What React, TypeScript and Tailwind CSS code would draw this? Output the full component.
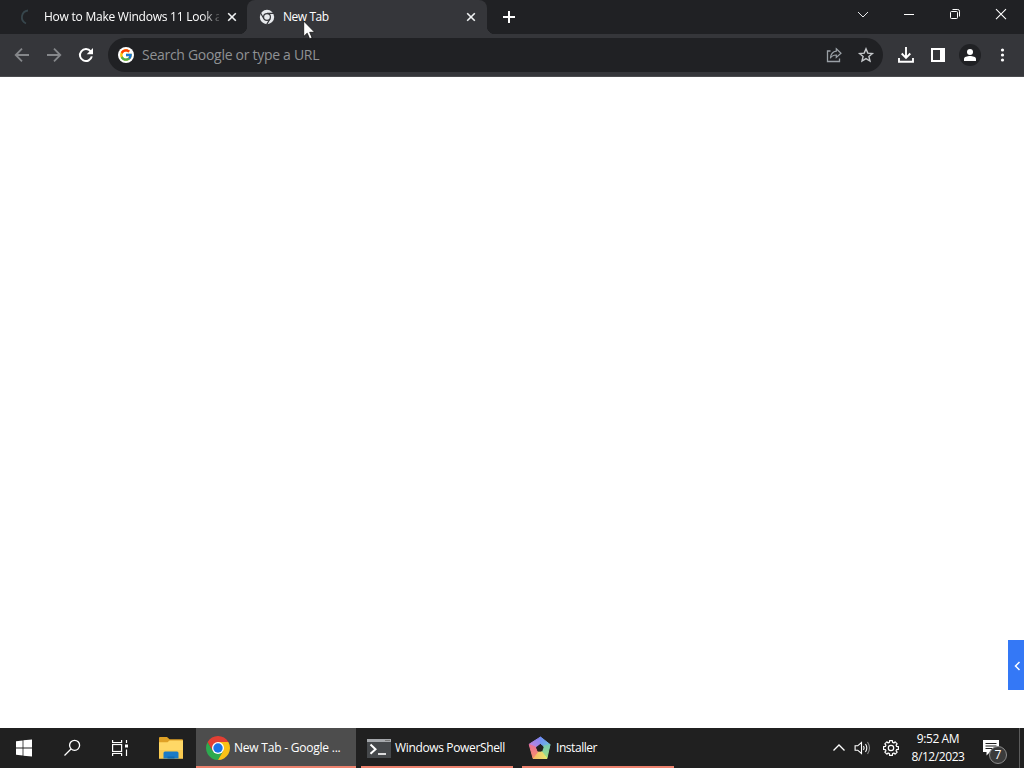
/**
 * Desktop: a dark browser window on an empty new tab, above the taskbar.
 */
import type { ReactNode } from 'react';
import { FcGoogle } from 'react-icons/fc';

interface IconProps {
  className?: string;
}

function CloseIcon({ className }: IconProps) {
  return (
    <svg width="10" height="10" viewBox="0 0 10 10" className={className} fill="none" stroke="#f1f3f4" strokeWidth="1.6">
      <path d="M1.2 1.2l7.6 7.6M8.8 1.2L1.2 8.8" />
    </svg>
  );
}

function ChromeMonoIcon({ className }: IconProps) {
  return (
    <svg width="16" height="16" viewBox="0 0 16 16" className={className}>
      <circle cx="8" cy="8" r="7.2" fill="#e8eaed" />
      <circle cx="8" cy="8" r="4" fill="#35363a" />
      <path d="M8 4.4h7M4.9 9.8L1.4 3.8M11.1 9.8L7.6 15.6" stroke="#35363a" strokeWidth="1.2" />
      <circle cx="8" cy="8" r="2.8" fill="#e8eaed" />
    </svg>
  );
}

function ChromeIcon() {
  return (
    <svg width="24" height="24" viewBox="0 0 24 24" className="shrink-0">
      <path d="M1.61 6A12 12 0 0 0 12 24l5.2-9L12 12l-5.2 3z" fill="#2da94f" />
      <path d="M1.61 6A12 12 0 0 1 22.39 6H12v6l-5.2 3z" fill="#e23f33" />
      <path d="M12 6h10.39A12 12 0 0 1 12 24l5.2-9z" fill="#fbc116" />
      <circle cx="12" cy="12" r="6" fill="#fff" />
      <circle cx="12" cy="12" r="4.7" fill="#1a73e8" />
    </svg>
  );
}

function InstallerIcon() {
  return (
    <svg width="24" height="24" viewBox="0 0 24 24" className="shrink-0">
      <defs>
        <linearGradient id="violet" x1="0" y1="1" x2="1" y2="0">
          <stop offset="0" stopColor="#c985d8" />
          <stop offset="1" stopColor="#7d86f5" />
        </linearGradient>
        <linearGradient id="blue" x1="0" y1="0" x2="1" y2="1">
          <stop offset="0" stopColor="#6f8cf8" />
          <stop offset="1" stopColor="#6fc7d8" />
        </linearGradient>
        <linearGradient id="green" x1="0" y1="0" x2="0" y2="1">
          <stop offset="0" stopColor="#74c9b4" />
          <stop offset="1" stopColor="#a5e27e" />
        </linearGradient>
        <linearGradient id="yellow" x1="0" y1="0" x2="1" y2="0">
          <stop offset="0" stopColor="#f8b564" />
          <stop offset="1" stopColor="#e4ec70" />
        </linearGradient>
        <linearGradient id="red" x1="0" y1="0" x2="0" y2="1">
          <stop offset="0" stopColor="#e8709a" />
          <stop offset="1" stopColor="#f6906a" />
        </linearGradient>
      </defs>
      <g strokeLinejoin="round" strokeWidth="1">
        <path d="M12.5 1L1.500 8 7.500 12l5-4.500z" fill="url(#violet)" stroke="url(#violet)" />
        <path d="M12.5 1l9.500 7.500L20.500 13l-5-3-3-2.500z" fill="url(#blue)" stroke="url(#blue)" />
        <path d="M22 8.500l-3 13.500-5.500-6 2-6z" fill="url(#green)" stroke="url(#green)" />
        <path d="M19 22.500H5l3-6.500h6z" fill="url(#yellow)" stroke="url(#yellow)" />
        <path d="M1.200 8.500l3.800 13.500 4.500-6-2-5z" fill="url(#red)" stroke="url(#red)" />
      </g>
      <path d="M12 8.200l3.700 2.800-1.400 4.200H9.600L8 11.300z" fill="#202020" />
    </svg>
  );
}

function TabStrip() {
  return (
    <div className="flex h-[34px] bg-[#202124] text-xs text-white">
      <div className="flex w-[247px] items-center pl-[19px]">
        <svg width="14" height="16" viewBox="0 0 14 16" fill="none" stroke="#37464c" strokeWidth="1.8">
          <path d="M9 1.500A6.800 6.800 0 0 0 7 14.500" />
        </svg>
        <span className="ml-[11px] w-[175px] whitespace-nowrap tracking-[-0.24px] [mask-image:linear-gradient(to_right,black_90%,transparent_103%)]">
          How to Make Windows 11 Look a
        </span>
        <CloseIcon className="ml-2" />
      </div>

      <div className="relative flex w-60 items-center rounded-t-lg bg-[#35363a] pl-3">
        <span className="absolute bottom-0 -left-2 size-2 bg-[radial-gradient(circle_at_0_0,transparent_8px,#35363a_8.5px)]" />
        <span className="absolute -right-2 bottom-0 size-2 bg-[radial-gradient(circle_at_100%_0,transparent_8px,#35363a_8.5px)]" />
        <ChromeMonoIcon />
        <span className="ml-2 flex-1 tracking-[-0.45px]">New Tab</span>
        <CloseIcon className="mr-[11px]" />
      </div>

      <svg width="14" height="14" viewBox="0 0 14 14" className="mt-[10px] ml-[15px]" stroke="#fff" strokeWidth="2">
        <path d="M7 1v12M1 7h12" />
      </svg>

      <div className="ml-auto flex h-[29px] items-center">
        <svg width="46" height="29" viewBox="0 0 46 29" fill="none" stroke="#e8eaed" strokeWidth="1">
          <path d="M18 12l5 5 5-5" />
        </svg>
        <svg width="46" height="29" viewBox="0 0 46 29" fill="none" stroke="#fff" strokeWidth="1">
          <path d="M18 14.5h10" />
        </svg>
        <svg width="46" height="29" viewBox="0 0 46 29" fill="none" stroke="#fff" strokeWidth="1">
          <rect x="18.5" y="11.5" width="7" height="7" rx="1" />
          <path d="M20.5 9.5h5.2a1.8 1.8 0 0 1 1.8 1.8v5.2" />
        </svg>
        <svg width="46" height="29" viewBox="0 0 46 29" fill="none" stroke="#fff" strokeWidth="1.1">
          <path d="M18 9.2l10 10M28 9.2l-10 10" />
        </svg>
      </div>
    </div>
  );
}

function ToolIcon({ children }: { children: ReactNode }) {
  return (
    <svg width="32" height="32" viewBox="-16 -16 32 32" fill="none" className="shrink-0">
      {children}
    </svg>
  );
}

function Toolbar() {
  return (
    <div className="flex h-[43px] items-center border-b border-[#4a4b4e] bg-[#35363a] pr-[6px] pl-[6px]">
      <ToolIcon>
        <path d="M7 0H-6M0-6.3L-6.3 0 0 6.3" stroke="#85878a" strokeWidth="1.8" />
      </ToolIcon>
      <ToolIcon>
        <path d="M-7 0H6M0-6.3L6.3 0 0 6.3" stroke="#85878a" strokeWidth="1.8" />
      </ToolIcon>
      <ToolIcon>
        <path d="M4.7-3.6A6 6 0 1 0 5.8 1.4" stroke="#fff" strokeWidth="2" />
        <path d="M7-7v6.3H.7z" fill="#fff" />
      </ToolIcon>

      <div className="ml-[6px] flex h-[34px] w-[775px] items-center rounded-full bg-[#202124] pl-[10px] pr-px">
        <span className="flex size-4 items-center justify-center rounded-full bg-white">
          <FcGoogle size={14} />
        </span>
        <span className="ml-2 flex-1 text-sm tracking-[-0.29px] text-[#8f9194]">Search Google or type a URL</span>
        <ToolIcon>
          <path d="M-3.5-4H-6.5V6.5H5.5V3.5" stroke="#9aa0a6" strokeWidth="1.3" />
          <path d="M2.3-6.2L7-1.8 2.3 2.4V0C-.6 0-2.4.9-3.6 3.2-3.2-.8-1.3-3.4 2.3-3.8z" stroke="#9aa0a6" strokeWidth="1.2" />
        </ToolIcon>
        <ToolIcon>
          <path
            d="M0-6.1l1.8 4.2 4.6.4-3.5 3 1.1 4.5L0 3.6-4 6l1.1-4.5-3.5-3 4.6-.4z"
            stroke="#c4c7ca"
            strokeWidth="1.4"
          />
        </ToolIcon>
      </div>

      <div className="ml-[7px] flex">
        <ToolIcon>
          <path d="M0-8V3M-4.3-1.5L0 2.8 4.3-1.5M-7 3v3.8H7V3" stroke="#fff" strokeWidth="1.9" />
        </ToolIcon>
        <ToolIcon>
          <path d="M-7-7H7V7H-7zM-5-5V5H2V-5z" fill="#fff" fillRule="evenodd" />
        </ToolIcon>
        <ToolIcon>
          <circle r="11" fill="#202124" />
          <circle cy="-3" r="3" fill="#fff" />
          <path d="M-6 6V3.8C-6 1.8-2.6.9 0 .9s6 .9 6 2.9V6z" fill="#fff" />
        </ToolIcon>
        <ToolIcon>
          <circle cx=".5" cy="-5" r="1.6" fill="#fff" />
          <circle cx=".5" r="1.6" fill="#fff" />
          <circle cx=".5" cy="5" r="1.6" fill="#fff" />
        </ToolIcon>
      </div>
    </div>
  );
}

function Taskbar() {
  return (
    <div className="flex h-10 bg-[#202020] text-xs text-white">
      <svg width="48" height="40" viewBox="0 0 48 40" fill="#fff">
        <path d="M16 13.300l6.600-.9v7.200H16zM23.400 12.300L32 11.500v8.100h-8.600zM16 20.400h6.600v7.200l-6.600-.9zM23.400 20.400H32V28.500l-8.600-.8z" />
      </svg>
      <svg width="48" height="40" viewBox="0 0 48 40" fill="none" stroke="#fff" strokeWidth="1.3">
        <circle cx="26.6" cy="17.3" r="5" />
        <path d="M23 21l-6.5 6.5" />
      </svg>
      <svg width="48" height="40" viewBox="0 0 48 40" fill="none" stroke="#fff" strokeWidth="1.2">
        <rect x="16.6" y="16.5" width="9" height="7" />
        <path d="M16.6 12v2.5h9V12M16.6 28v-2.5h9V28M30.5 12v3M30.5 21.5V28" />
        <rect x="29" y="16.5" width="3" height="3" fill="#fff" stroke="none" />
      </svg>
      <svg width="52" height="40" viewBox="0 0 52 40">
        <path d="M15 10q0-1 1-1h7l2.500 2.200H38q1 0 1 1v4H15z" fill="#dfa126" />
        <path d="M15 14.200h8.500l2-1.800H39v18.100H15z" fill="#ffd866" />
        <path d="M15 22h24v8.500H15z" fill="#fbcb50" />
        <path d="M19.500 30.500V25q0-1.500 1.500-1.500h12q1.500 0 1.500 1.500v5.500z" fill="#1b7ac6" />
        <path d="M23.500 30.500v-2h7v2z" fill="#1168b0" />
      </svg>

      <div className="flex w-40 items-center border-b-2 border-[#ed826e] bg-[#4d4d4d] pt-[2px] pl-[10px]">
        <ChromeIcon />
        <span className="ml-1 whitespace-nowrap tracking-[-0.22px]">New Tab - Google ...</span>
      </div>
      <div className="ml-[5px] flex w-[152px] items-center border-b-2 border-[#ed826e] pt-[2px] pl-[6px]">
        <svg width="24" height="19" viewBox="0 0 24 19" className="shrink-0">
          <path d="M0 0h24v19H0z" fill="#45484b" />
          <path d="M0 0h24v3H0z" fill="#a5a8ac" />
          <path d="M18 1h5v1h-5z" fill="#777" />
          <path d="M3.500 5.500l5 4.700-5 4.500" fill="none" stroke="#fff" strokeWidth="2" />
          <path d="M11 15h8" stroke="#fff" strokeWidth="1.600" />
        </svg>
        <span className="ml-1 whitespace-nowrap tracking-[-0.35px]">Windows PowerShell</span>
      </div>
      <div className="ml-[9px] flex w-[152px] items-center border-b-2 border-[#ed826e] pt-[2px] pl-[6px]">
        <InstallerIcon />
        <span className="ml-1 whitespace-nowrap tracking-[-0.45px]">Installer</span>
      </div>

      <div className="ml-auto flex items-center">
        <svg width="24" height="40" viewBox="0 0 24 40" fill="none" stroke="#fff" strokeWidth="1.3">
          <path d="M6.500 22.500l5.500-5.500 5.500 5.500" />
        </svg>
        <svg width="26" height="40" viewBox="0 0 26 40" fill="none" stroke="#fff" strokeWidth="1.1">
          <path d="M4.100 17.800h2.600l3.800-3.300v11l-3.800-3.300H4.100z" />
          <path d="M12.500 18q1.300 2 0 4M14.500 16q2.600 4 0 8" />
          <path d="M16.500 14q4 6 0 12" stroke="#8b8b8b" />
        </svg>
        <svg width="28" height="40" viewBox="-14 -20 28 40" fill="none" stroke="#fff" strokeWidth="1.2" strokeLinejoin="round">
          <path d="M-1.4-7.4H1.4L1.6-5.6 2.9-5 4.2-6.2 6.2-4.2 5-2.9 5.6-1.6 7.4-1.4V1.4L5.6 1.6 5 2.9 6.2 4.2 4.2 6.2 2.9 5 1.6 5.6 1.4 7.4H-1.4L-1.6 5.6-2.9 5-4.2 6.2-6.2 4.2-5 2.9-5.6 1.6-7.4 1.4V-1.4L-5.6-1.6-5-2.9-6.2-4.2-4.2-6.2-2.9-5-1.6-5.6z" />
          <circle r="2.7" />
        </svg>
        <div className="w-[66px] text-center leading-[18px] tracking-[-0.42px]">
          <div>9:52 AM</div>
          <div>8/12/2023</div>
        </div>
        <div className="relative ml-[11px] h-10 w-[37px]">
          <svg width="18" height="18" viewBox="0 0 18 18" className="mt-3">
            <path d="M1 0h16v12H8l-3.500 3.500V12H1z" fill="#fff" />
            <path d="M3.500 3.500h11M3.500 6h11M3.500 8.500h11" stroke="#202020" />
          </svg>
          <span className="absolute top-[18px] left-[7px] flex size-[18px] items-center justify-center rounded-full border border-[#8b8b8b] bg-[#3b3b3b] text-xs">
            7
          </span>
        </div>
        <div className="h-10 w-[5px] border-l border-[#5c5c5c]" />
      </div>
    </div>
  );
}

export default function App() {
  return (
    <div className="relative flex h-[768px] w-[1024px] flex-col overflow-hidden font-['Open_Sans','Noto_Sans',sans-serif]">
      <TabStrip />
      <Toolbar />
      <main className="flex flex-1 items-end justify-end bg-white pb-[38px]">
        <button type="button" className="flex h-[50px] w-4 items-center justify-center bg-[#3478f6] pt-[2px] pl-[2px]">
          <svg width="7" height="10" viewBox="0 0 7 10" fill="none" stroke="#fff" strokeWidth="1.5">
            <path d="M5.500 1L1.500 5l4 4" />
          </svg>
        </button>
      </main>
      <Taskbar />

      {/* mouse pointer */}
      <svg width="13" height="20" viewBox="0 0 13 20" className="absolute top-[20px] left-[303px]">
        <path d="M.7 1v15.500l3.500-3.300 2.400 5.600 2.500-1.100-2.400-5.400h5z" fill="#fff" stroke="#111" strokeWidth=".8" />
      </svg>
    </div>
  );
}
